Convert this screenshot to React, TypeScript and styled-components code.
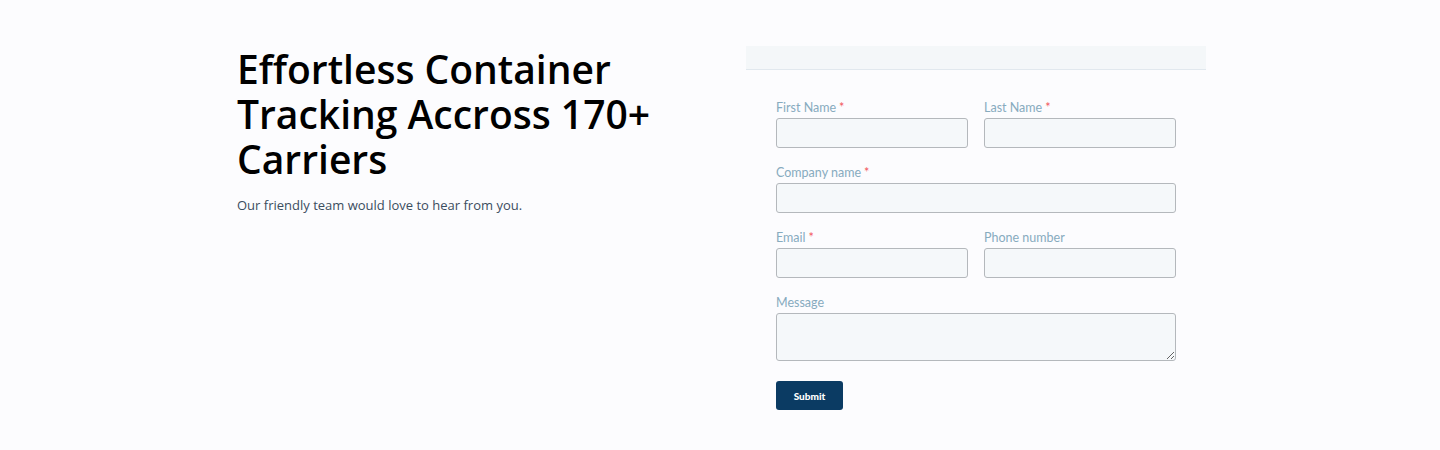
import {FC} from "react";
import styled, {createGlobalStyle} from "styled-components";

const GlobalStyle = createGlobalStyle`
	html,
	body {
		margin: 0;
		padding: 0;
		background: #fcfcfe;
	}
`;

const Section = styled.section`
	display: grid;
	grid-template-columns: 1fr 460px;
	column-gap: 40px;
	width: 969px;
	margin-left: calc(50% - 483px);
	padding: 46px 0 40px;
	box-sizing: border-box;
`;

const Intro = styled.div`
	display: flex;
	flex-direction: column;
`;

const Heading = styled.h1`
	margin: 0;
	max-width: 450px;
	font-family: "Open Sans", sans-serif;
	font-weight: 600;
	font-size: 39px;
	line-height: 45px;
	color: #000;
`;

const Lead = styled.p`
	margin: 14px 0 0;
	font-family: "Open Sans", sans-serif;
	font-size: 13px;
	line-height: 20px;
	color: #3b4d5f;
`;

const FormCard = styled.div`
	display: flex;
	flex-direction: column;
`;

const FormHeader = styled.div`
	height: 23px;
	background: #f4f7f9;
	border-bottom: 1px solid #e1e8ee;
`;

const Form = styled.form`
	display: flex;
	flex-direction: column;
	gap: 17px;
	padding: 30px 30px 0;
`;

const Row = styled.div<{$cols: number}>`
	display: grid;
	grid-template-columns: repeat(${(p) => p.$cols}, 1fr);
	column-gap: 16px;
`;

const Field = styled.div`
	display: flex;
	flex-direction: column;
	gap: 2px;
`;

const Label = styled.label`
	font-family: "Lato", sans-serif;
	font-size: 12.5px;
	line-height: 16px;
	color: #87abbe;
`;

const Required = styled.span`
	color: #f2545b;
	margin-left: 3px;
`;

const Input = styled.input`
	height: 30px;
	box-sizing: border-box;
	border: 1px solid #b4b8bc;
	border-radius: 3px;
	background: #f5f8fa;
	padding: 0 8px;
	font-family: "Lato", sans-serif;
	font-size: 13px;
	outline: none;
`;

const TextArea = styled.textarea`
	height: 48px;
	box-sizing: border-box;
	border: 1px solid #b4b8bc;
	border-radius: 3px;
	background: #f5f8fa;
	padding: 6px 8px;
	font-family: "Lato", sans-serif;
	font-size: 13px;
	resize: vertical;
	outline: none;
`;

const SubmitButton = styled.button`
	align-self: flex-start;
	margin-top: 3px;
	width: 67px;
	height: 29px;
	border: none;
	border-radius: 3px;
	background: #0b3b63;
	color: #fff;
	font-family: "Lato", sans-serif;
	font-weight: 900;
	font-size: 10px;
	cursor: pointer;
`;

interface IFieldProps {
	label: string;
	required?: boolean;
	type?: string;
}

const TextField: FC<IFieldProps> = ({label, required, type = "text"}) => (
	<Field>
		<Label>
			{label}
			{required && <Required>*</Required>}
		</Label>
		<Input type={type} />
	</Field>
);

const App: FC = () => {
	return (
		<>
			<GlobalStyle />
			<Section>
				<Intro>
					<Heading>Effortless Container Tracking Accross 170+ Carriers</Heading>
					<Lead>Our friendly team would love to hear from you.</Lead>
				</Intro>
				<FormCard>
					<FormHeader />
					<Form onSubmit={(e) => e.preventDefault()}>
						<Row $cols={2}>
							<TextField label="First Name" required />
							<TextField label="Last Name" required />
						</Row>
						<Row $cols={1}>
							<TextField label="Company name" required />
						</Row>
						<Row $cols={2}>
							<TextField label="Email" required type="email" />
							<TextField label="Phone number" type="tel" />
						</Row>
						<Row $cols={1}>
							<Field>
								<Label>Message</Label>
								<TextArea />
							</Field>
						</Row>
						<SubmitButton type="submit">Submit</SubmitButton>
					</Form>
				</FormCard>
			</Section>
		</>
	);
};

export default App;
